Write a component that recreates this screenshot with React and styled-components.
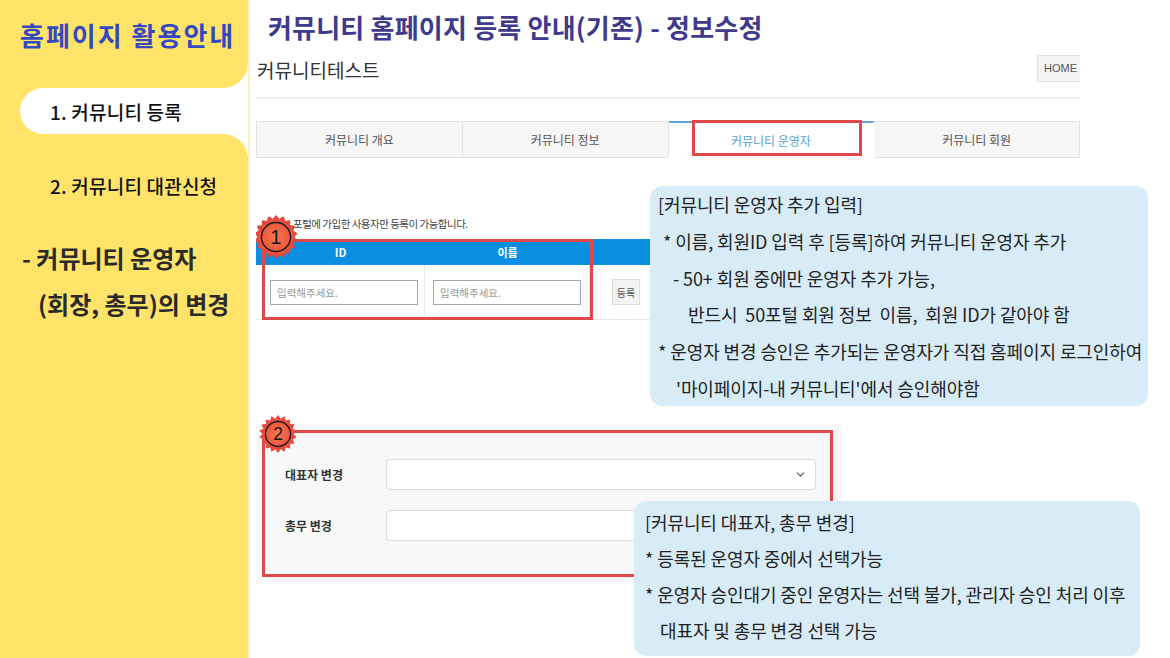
import React from "react";
import styled, { createGlobalStyle } from "styled-components";
import { ChevronDown } from "lucide-react";

const GlobalStyle = createGlobalStyle`
  html, body {
    margin: 0;
    padding: 0;
  }
  body {
    width: 1170px;
    height: 658px;
    overflow: hidden;
    background: #fff;
    font-family: "Noto Sans CJK KR", "Noto Sans", sans-serif;
  }
`;

const Slide = styled.div`
  display: flex;
  width: 1170px;
  height: 658px;
  overflow: hidden;
`;

/* ---------- left yellow menu ---------- */

const Sidebar = styled.aside`
  width: 248px;
  flex: none;
  background: #ffe469;
  display: flex;
  flex-direction: column;
`;

const SideTitle = styled.h2`
  margin: 0;
  padding: 18px 0 0 20px;
  font-size: 26px;
  line-height: 34px;
  font-weight: 700;
  color: #3449c0;
  letter-spacing: 2px;
`;

const MenuList = styled.ul`
  list-style: none;
  margin: 36px 0 0 20px;
  padding: 0;
  display: flex;
  flex-direction: column;
  gap: 28px;
`;

const MenuItem = styled.li`
  position: relative;
  height: 46px;
  display: flex;
  align-items: center;
  padding-left: 30px;
  font-size: 19px;
  font-weight: 500;
  letter-spacing: 0.2px;
  color: #111;
  border-radius: 23px 0 0 23px;
  background: ${(p) => (p.$active ? "#fff" : "transparent")};

  ${(p) =>
    p.$active &&
    `
    &::before, &::after {
      content: "";
      position: absolute;
      right: 0;
      width: 25px;
      height: 25px;
    }
    &::before {
      top: -25px;
      border-bottom-right-radius: 25px;
      box-shadow: 8px 8px 0 8px #fff;
    }
    &::after {
      bottom: -25px;
      border-top-right-radius: 25px;
      box-shadow: 8px -8px 0 8px #fff;
    }
  `}
`;

const SideNote = styled.div`
  margin: 27px 0 0 22px;
  font-size: 24px;
  font-weight: 700;
  line-height: 46px;
  color: #2a2a2a;
`;

const NoteLine = styled.div`
  padding-left: ${(p) => p.$indent || 0}px;
`;

/* ---------- main area ---------- */

const Main = styled.main`
  flex: 1;
  position: relative;
  border-left: 2px solid #fdf2c2;
  padding-left: 6px;
`;

const PageTitle = styled.h1`
  margin: 0;
  padding: 10px 0 0 12px;
  font-size: 26px;
  line-height: 34px;
  font-weight: 700;
  color: #3f3a8c;
  letter-spacing: 0.2px;
`;

const Shot = styled.section`
  width: 824px;
  overflow: hidden;
`;

const ShotHeader = styled.div`
  height: 50px;
  display: flex;
  align-items: center;
  justify-content: space-between;
`;

const CommunityName = styled.span`
  font-size: 19px;
  color: #333;
  padding-left: 1px;
`;

const HomeButton = styled.span`
  height: 27px;
  box-sizing: border-box;
  display: flex;
  align-items: center;
  padding: 0 12px 0 6px;
  margin-right: -10px;
  margin-top: -2px;
  background: #f4f4f4;
  border: 1px solid #e2e2e2;
  font-family: "Liberation Sans", sans-serif;
  font-size: 11px;
  color: #555;
`;

const Divider = styled.div`
  margin-top: 3px;
  height: 2px;
  background: #efefef;
`;

const Tabs = styled.div`
  margin-top: 22px;
  display: flex;
  height: 37px;
`;

const Tab = styled.div`
  position: relative;
  flex: 1;
  display: flex;
  align-items: center;
  justify-content: center;
  box-sizing: border-box;
  font-size: 12px;
  color: ${(p) => (p.$active ? "#5aa3d4" : "#555")};
  background: ${(p) => (p.$active ? "#fff" : "#f6f6f6")};
  border: 1px solid ${(p) => (p.$active ? "transparent" : "#e2e2e2")};
  border-top: ${(p) => (p.$active ? "2px solid #5aa5d6" : "1px solid #e2e2e2")};
  border-bottom-color: ${(p) => (p.$active ? "transparent" : "#e2e2e2")};
  & + & {
    border-left: none;
  }
`;

const Highlight = styled.div`
  position: absolute;
  border: 3px solid #e0484a;
  box-sizing: border-box;
  pointer-events: none;
`;

const Notice = styled.p`
  margin: 58px 0 0;
  padding-left: 37px;
  font-size: 10.5px;
  line-height: 16px;
  letter-spacing: -0.5px;
  color: #444;
`;

const Table = styled.div`
  position: relative;
  margin-top: 7px;
`;

const HeadRow = styled.div`
  display: grid;
  grid-template-columns: 169px 165px 1fr;
  height: 26px;
  background: #0b8fe0;
  color: #fff;
  font-size: 11px;
  font-weight: 700;
`;

const HeadCell = styled.div`
  display: flex;
  align-items: center;
  justify-content: center;
  font-family: "Noto Sans CJK KR", "Liberation Sans", sans-serif;
`;

const BodyRow = styled.div`
  display: grid;
  grid-template-columns: 169px 165px 1fr;
  height: 54px;
  border-bottom: 1px solid #e6e6e6;
`;

const BodyCell = styled.div`
  display: flex;
  align-items: center;
  box-sizing: border-box;
  padding: ${(p) => p.$pad};
  border-right: ${(p) => (p.$last ? "none" : "1px solid #e8e8e8")};
`;

const TextInput = styled.div`
  width: 149px;
  height: 25px;
  box-sizing: border-box;
  border: 1px solid #a8a8a8;
  display: flex;
  align-items: center;
  padding-left: 6px;
  font-size: 10.5px;
  color: #999;
  background: #fff;
`;

const SmallButton = styled.span`
  width: 28px;
  height: 26px;
  box-sizing: border-box;
  display: flex;
  align-items: center;
  justify-content: center;
  background: #f3f3f3;
  border: 1px solid #dcdcdc;
  font-size: 10px;
  color: #555;
`;

const Panel = styled.div`
  position: relative;
  margin-top: 104px;
  width: 586px;
  height: 160px;
  box-sizing: border-box;
  background: #f8f8f8;
  padding: 6px 9px 7px 6px;
`;

const PanelFrame = styled.div`
  height: 100%;
  box-sizing: border-box;
  border: 3px solid #e0484a;
  padding: 26px 14px 0 20px;
  display: flex;
  flex-direction: column;
  gap: 20px;
`;

const FieldRow = styled.div`
  display: flex;
  align-items: center;
`;

const FieldLabel = styled.span`
  width: 101px;
  flex: none;
  font-size: 12px;
  font-weight: 700;
  color: #333;
`;

const FieldBox = styled.div`
  flex: 1;
  height: 31px;
  box-sizing: border-box;
  background: #fff;
  border: 1px solid #dcdcdc;
  border-radius: 4px;
  display: flex;
  align-items: center;
  justify-content: flex-end;
  padding-right: 8px;
  color: #555;
`;

const BadgeWrap = styled.div`
  position: absolute;
  left: ${(p) => p.$left}px;
  top: ${(p) => p.$top}px;
  width: ${(p) => p.$size}px;
  height: ${(p) => p.$size}px;
`;

const Callout = styled.div`
  position: absolute;
  left: ${(p) => p.$left}px;
  top: ${(p) => p.$top}px;
  width: ${(p) => p.$width}px;
  height: ${(p) => p.$height}px;
  box-sizing: border-box;
  padding: ${(p) => p.$pad};
  background: #d8ecf8;
  border-radius: 12px;
  font-size: 18px;
  line-height: ${(p) => p.$lh}px;
  letter-spacing: -0.1px;
  color: #222;
  white-space: pre;
`;

const CalloutLine = styled.div`
  padding-left: ${(p) => p.$indent || 0}px;
`;

const starPoints = (n, R, r, c) => {
  const pts = [];
  for (let i = 0; i < n * 2; i++) {
    const rad = i % 2 === 0 ? R : r;
    const a = (Math.PI * i) / n - Math.PI / 2;
    pts.push(`${(c + rad * Math.cos(a)).toFixed(2)},${(c + rad * Math.sin(a)).toFixed(2)}`);
  }
  return pts.join(" ");
};

function Badge({ num, size, left, top }) {
  const c = size / 2;
  return (
    <BadgeWrap $size={size} $left={left} $top={top}>
      <svg width={size} height={size} viewBox={`0 0 ${size} ${size}`}>
        <defs>
          <radialGradient id={`badge${num}`} cx="50%" cy="50%" r="50%">
            <stop offset="0%" stopColor="#f47a4e" />
            <stop offset="60%" stopColor="#ee5a40" />
            <stop offset="100%" stopColor="#e0403a" />
          </radialGradient>
        </defs>
        <polygon points={starPoints(18, c, c - 3.5, c)} fill={`url(#badge${num})`} />
        <circle cx={c} cy={c} r={size * 0.33} fill="none" stroke="#1c1c1c" strokeWidth="1.4" />
        <text
          x={c}
          y={c + size * 0.16}
          textAnchor="middle"
          fontSize={size * 0.46}
          fontFamily="Liberation Sans, sans-serif"
          fill="#151515"
        >
          {num}
        </text>
      </svg>
    </BadgeWrap>
  );
}

const tabs = ["커뮤니티 개요", "커뮤니티 정보", "커뮤니티 운영자", "커뮤니티 회원"];

export default function App() {
  return (
    <>
      <GlobalStyle />
      <Slide>
        <Sidebar>
          <SideTitle>홈페이지 활용안내</SideTitle>
          <MenuList>
            <MenuItem $active>1. 커뮤니티 등록</MenuItem>
            <MenuItem>2. 커뮤니티 대관신청</MenuItem>
          </MenuList>
          <SideNote>
            <NoteLine>- 커뮤니티 운영자</NoteLine>
            <NoteLine $indent={16}>(회장, 총무)의 변경</NoteLine>
          </SideNote>
        </Sidebar>

        <Main>
          <PageTitle>커뮤니티 홈페이지 등록 안내(기존) - 정보수정</PageTitle>
          <Shot>
            <ShotHeader>
              <CommunityName>커뮤니티테스트</CommunityName>
              <HomeButton>HOME</HomeButton>
            </ShotHeader>
            <Divider />

            <Tabs>
              {tabs.map((t, i) => (
                <Tab key={t} $active={i === 2}>
                  {t}
                  {i === 2 && <Highlight style={{ left: 23, right: 11, top: -3, bottom: 1 }} />}
                </Tab>
              ))}
            </Tabs>

            <Notice>포털에 가입한 사용자만 등록이 가능합니다.</Notice>

            <Table>
              <HeadRow>
                <HeadCell>ID</HeadCell>
                <HeadCell>이름</HeadCell>
                <HeadCell />
              </HeadRow>
              <BodyRow>
                <BodyCell $pad="0 6px 0 14px">
                  <TextInput>입력해주세요.</TextInput>
                </BodyCell>
                <BodyCell $pad="0 8px 0 8px">
                  <TextInput>입력해주세요.</TextInput>
                </BodyCell>
                <BodyCell $pad="0 0 0 22px" $last>
                  <SmallButton>등록</SmallButton>
                </BodyCell>
              </BodyRow>
              <Highlight style={{ left: 6, top: 0, width: 331, height: 81 }} />
              <Badge num="1" size={44} left={-2} top={-24} />
            </Table>

            <Panel>
              <PanelFrame>
                <FieldRow>
                  <FieldLabel>대표자 변경</FieldLabel>
                  <FieldBox>
                    <ChevronDown size={13} strokeWidth={2} />
                  </FieldBox>
                </FieldRow>
                <FieldRow>
                  <FieldLabel>총무 변경</FieldLabel>
                  <FieldBox />
                </FieldRow>
              </PanelFrame>
              <Badge num="2" size={38} left={3} top={-9} />
            </Panel>
          </Shot>

          <Callout $left={400} $top={186} $width={498} $height={220} $pad="0 8px" $lh={36.8}>
            <CalloutLine>[커뮤니티 운영자 추가 입력]</CalloutLine>
            <CalloutLine $indent={5}>* 이름, 회원ID 입력 후 [등록]하여 커뮤니티 운영자 추가</CalloutLine>
            <CalloutLine $indent={15}>- 50+ 회원 중에만 운영자 추가 가능,</CalloutLine>
            <CalloutLine $indent={30}>반드시  50포털 회원 정보  이름,  회원 ID가 같아야 함</CalloutLine>
            <CalloutLine>* 운영자 변경 승인은 추가되는 운영자가 직접 홈페이지 로그인하여</CalloutLine>
            <CalloutLine $indent={18}>'마이페이지-내 커뮤니티'에서 승인해야함</CalloutLine>
          </Callout>

          <Callout $left={384} $top={501} $width={506} $height={155} $pad="3px 11px 0" $lh={36}>
            <CalloutLine>[커뮤니티 대표자, 총무 변경]</CalloutLine>
            <CalloutLine>* 등록된 운영자 중에서 선택가능</CalloutLine>
            <CalloutLine>* 운영자 승인대기 중인 운영자는 선택 불가, 관리자 승인 처리 이후</CalloutLine>
            <CalloutLine $indent={15}>대표자 및 총무 변경 선택 가능</CalloutLine>
          </Callout>
        </Main>
      </Slide>
    </>
  );
}
